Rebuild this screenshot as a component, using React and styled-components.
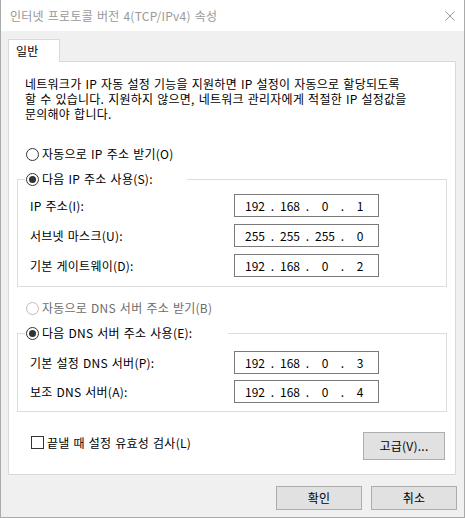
import React from "react";
import styled, { createGlobalStyle } from "styled-components";

const GlobalStyle = createGlobalStyle`
  html, body { margin: 0; padding: 0; background: #ffffff; }
  body {
    font-family: "Noto Sans CJK KR", "Noto Sans", sans-serif;
    font-size: 12px;
    letter-spacing: 0.25px;
    word-spacing: 1px;
    color: #000;
  }
  * { box-sizing: border-box; }
`;

const Window = styled.div`
  width: 465px;
  height: 518px;
  border: 1px solid #aaaaaa;
  border-top: none;
  background: #f0f0f0;
  display: flex;
  flex-direction: column;
`;

const TitleBar = styled.div`
  height: 31px;
  flex: none;
  background: #ffffff;
  display: flex;
  align-items: center;
  justify-content: space-between;
  padding: 0 9px;
`;

const Title = styled.span`
  color: #999999;
  font-size: 12px;
  line-height: 16px;
`;

const CloseButton = styled.span`
  width: 10px;
  height: 10px;
  display: flex;
`;

const Body = styled.div`
  flex: 1;
  display: flex;
  flex-direction: column;
  padding: 8px 8px 0 7px;
  min-height: 0;
`;

const TabStrip = styled.div`
  display: flex;
  position: relative;
  z-index: 1;
  margin-bottom: -1px;
`;

const Tab = styled.div`
  width: 52px;
  height: 23px;
  border: 1px solid #d9d9d9;
  border-bottom: none;
  background: #ffffff;
  padding-left: 7px;
  line-height: 21px;
`;

const Panel = styled.div`
  flex: 1;
  min-height: 0;
  border: 1px solid #d9d9d9;
  background: #ffffff;
  display: flex;
  flex-direction: column;
  padding: 14px 8px 0 8px;
`;

const Description = styled.div`
  padding-left: 8px;
  display: flex;
  flex-direction: column;
`;

const DescLine = styled.span`
  display: block;
  height: 15px;
  line-height: 15px;
  white-space: nowrap;
`;

const RadioLine = styled.label`
  display: flex;
  align-items: center;
  gap: 3px;
  height: 16px;
  line-height: 16px;
  margin-top: ${(p) => p.$top}px;
  padding-left: ${(p) => p.$indent}px;
  color: ${(p) => (p.$disabled ? "#6d6d6d" : "#000")};
  white-space: nowrap;
`;

const RadioCircle = styled.span`
  position: relative;
  flex: none;
  width: 13px;
  height: 13px;
  border-radius: 50%;
  border: 1px solid ${(p) => (p.$disabled ? "#bcbcbc" : "#333333")};
  background: #ffffff;
  &::after {
    content: "";
    display: ${(p) => (p.$checked ? "block" : "none")};
    position: absolute;
    left: 2px;
    top: 2px;
    width: 7px;
    height: 7px;
    border-radius: 50%;
    background: #333333;
  }
`;

const Group = styled.fieldset`
  margin: 9px 0 0 0;
  padding: ${(p) => p.$pt}px 0 ${(p) => p.$pb}px 7px;
  border: 1px solid #dcdcdc;
  min-width: 0;
`;

const GroupLegend = styled.legend`
  margin: 0;
  padding: 0 0 0 1px;
  width: ${(p) => p.$width}px;
  height: 16px;
  line-height: 16px;
`;

const LegendInner = styled.span`
  display: flex;
  align-items: center;
  gap: 3px;
  height: 16px;
  white-space: nowrap;
`;

const FieldGrid = styled.div`
  display: grid;
  grid-template-columns: 204px 145px;
  row-gap: ${(p) => p.$gap}px;
  padding-left: 5px;
  align-items: center;
`;

const FieldLabel = styled.span`
  line-height: 16px;
  white-space: nowrap;
`;

const IpBox = styled.div`
  width: 145px;
  height: 23px;
  border: 1px solid #7a7a7a;
  background: #ffffff;
  display: flex;
  align-items: center;
  padding-left: 6px;
  letter-spacing: 0;
`;

const Octet = styled.span`
  width: 28px;
  text-align: center;
  line-height: 16px;
`;

const Dot = styled.span`
  width: 7px;
  text-align: center;
  line-height: 16px;
`;

const BottomRow = styled.div`
  display: flex;
  justify-content: space-between;
  align-items: flex-start;
  margin-top: 20px;
  padding: 0 2px 0 14px;
`;

const CheckLine = styled.label`
  display: flex;
  align-items: center;
  gap: 3px;
  height: 15px;
  margin-top: 3px;
  white-space: nowrap;
`;

const CheckBox = styled.span`
  flex: none;
  width: 13px;
  height: 13px;
  border: 1px solid #333333;
  background: #ffffff;
`;

const Button = styled.button`
  width: ${(p) => p.$w}px;
  height: ${(p) => p.$h}px;
  background: #e1e1e1;
  border: 1px solid #adadad;
  border-radius: 0;
  font-family: inherit;
  font-size: 12px;
  letter-spacing: 0.25px;
  color: #000;
  padding: 0;
  line-height: 16px;
`;

const Footer = styled.div`
  display: flex;
  justify-content: flex-end;
  gap: 9px;
  margin: 11px -1px 0 0;
  padding-bottom: 7px;
`;

const description = [
  "네트워크가 IP 자동 설정 기능을 지원하면 IP 설정이 자동으로 할당되도록",
  "할 수 있습니다. 지원하지 않으면, 네트워크 관리자에게 적절한 IP 설정값을",
  "문의해야 합니다.",
];

const ipGroup = [
  { label: "IP 주소(I):", value: ["192", "168", "0", "1"] },
  { label: "서브넷 마스크(U):", value: ["255", "255", "255", "0"] },
  { label: "기본 게이트웨이(D):", value: ["192", "168", "0", "2"] },
];

const dnsGroup = [
  { label: "기본 설정 DNS 서버(P):", value: ["192", "168", "0", "3"] },
  { label: "보조 DNS 서버(A):", value: ["192", "168", "0", "4"] },
];

function IpField({ value }) {
  return (
    <IpBox>
      {value.map((o, i) => (
        <React.Fragment key={i}>
          <Octet>{o}</Octet>
          {i < 3 && <Dot>.</Dot>}
        </React.Fragment>
      ))}
    </IpBox>
  );
}

function Rows({ rows, gap }) {
  return (
    <FieldGrid $gap={gap}>
      {rows.map((r) => (
        <React.Fragment key={r.label}>
          <FieldLabel>{r.label}</FieldLabel>
          <IpField value={r.value} />
        </React.Fragment>
      ))}
    </FieldGrid>
  );
}

export default function App() {
  return (
    <>
      <GlobalStyle />
      <Window>
        <TitleBar>
          <Title>인터넷 프로토콜 버전 4(TCP/IPv4) 속성</Title>
          <CloseButton>
            <svg width="10" height="10" viewBox="0 0 10 10">
              <path d="M0.5 0.5 L9.5 9.5 M9.5 0.5 L0.5 9.5" stroke="#999" strokeWidth="1" fill="none" />
            </svg>
          </CloseButton>
        </TitleBar>
        <Body>
          <TabStrip>
            <Tab>일반</Tab>
          </TabStrip>
          <Panel>
            <Description>
              {description.map((line) => (
                <DescLine key={line}>{line}</DescLine>
              ))}
            </Description>

            <RadioLine $top={25} $indent={9}>
              <RadioCircle />
              자동으로 IP 주소 받기(O)
            </RadioLine>

            <Group $pt={7} $pb={9}>
              <GroupLegend $width={162}>
                <LegendInner>
                  <RadioCircle $checked />
                  다음 IP 주소 사용(S):
                </LegendInner>
              </GroupLegend>
              <Rows rows={ipGroup} gap={7} />
            </Group>

            <RadioLine $top={13} $indent={9} $disabled>
              <RadioCircle $disabled />
              자동으로 DNS 서버 주소 받기(B)
            </RadioLine>

            <Group $pt={10} $pb={8}>
              <GroupLegend $width={203}>
                <LegendInner>
                  <RadioCircle $checked />
                  다음 DNS 서버 주소 사용(E):
                </LegendInner>
              </GroupLegend>
              <Rows rows={dnsGroup} gap={6} />
            </Group>

            <BottomRow>
              <CheckLine>
                <CheckBox />
                끝낼 때 설정 유효성 검사(L)
              </CheckLine>
              <Button $w={82} $h={28}>고급(V)...</Button>
            </BottomRow>
          </Panel>
          <Footer>
            <Button $w={86} $h={24}>확인</Button>
            <Button $w={86} $h={24}>취소</Button>
          </Footer>
        </Body>
      </Window>
    </>
  );
}
